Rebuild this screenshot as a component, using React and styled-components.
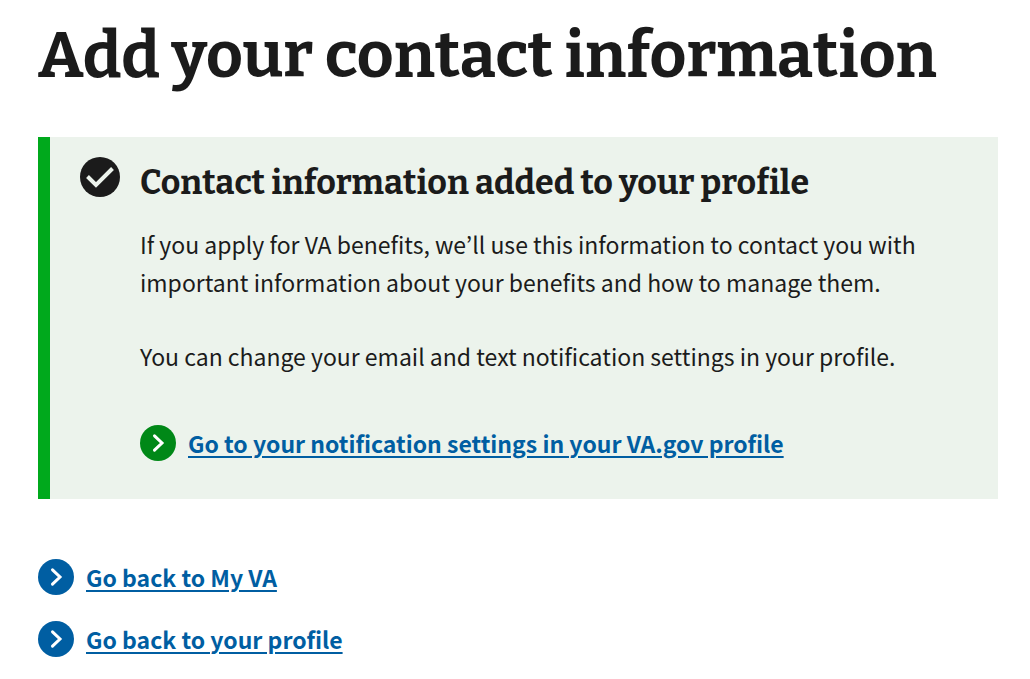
import React from "react";
import styled, { createGlobalStyle } from "styled-components";

const GlobalStyle = createGlobalStyle`
  * { box-sizing: border-box; }
  body {
    margin: 0;
    background: #fff;
    color: #1b1b1b;
    font-family: "Noto Sans CJK KR", "Noto Sans", sans-serif;
  }
`;

const Page = styled.main`
  padding: 16px 32px 16px 38px;
`;

const Title = styled.h1`
  margin: 0 0 41px;
  font: 700 64px/80px Bitter, "DejaVu Serif", serif;
`;

const Alert = styled.section`
  display: flex;
  gap: 20px;
  padding: 20px 30px 38px;
  border-left: 12px solid #00a91c;
  background: #ecf3ec;
`;

const StatusIcon = styled.svg`
  flex: none;
  width: 40px;
  height: 40px;
`;

const AlertBody = styled.div`
  min-width: 0;
`;

const AlertTitle = styled.h2`
  margin: 4px 0 20px;
  font: 700 34px/44px Bitter, "DejaVu Serif", serif;
`;

const Text = styled.p`
  margin: 0 0 36px;
  font-size: 23px;
  line-height: 38px;
`;

const AlertAction = styled.div`
  padding-top: 14px;
`;

const ActionLink = styled.a`
  display: flex;
  width: fit-content;
  align-items: center;
  gap: 12px;
  color: #005ea2;
  font-size: 23px;
  font-weight: 700;
  line-height: 36px;
  text-decoration: none;
`;

const LinkLabel = styled.span`
  text-decoration: underline;
  text-decoration-thickness: 2px;
  text-underline-offset: 3px;
`;

const LinkIcon = styled.svg`
  flex: none;
  width: 36px;
  height: 36px;
  fill: ${(p) => (p.$primary ? "#008817" : "#005ea2")};
`;

const LinkList = styled.nav`
  display: flex;
  flex-direction: column;
  gap: 26px;
  margin-top: 60px;
`;

function Action({ primary, children }) {
  return (
    <ActionLink href="#">
      <LinkIcon $primary={primary} viewBox="0 0 36 36" aria-hidden="true">
        <circle cx="18" cy="18" r="18" />
        <path
          d="M14.500 10.800 22 18l-7.500 7.200"
          fill="none"
          stroke="#fff"
          strokeWidth="3"
          strokeLinecap="round"
        />
      </LinkIcon>
      <LinkLabel>{children}</LinkLabel>
    </ActionLink>
  );
}

export default function App() {
  return (
    <>
      <GlobalStyle />
      <Page>
        <Title>Add your contact information</Title>
        <Alert>
          <StatusIcon viewBox="0 0 40 40" aria-hidden="true">
            <circle cx="20" cy="20" r="20" fill="#1b1b1b" />
            <path
              d="M7.500 19.500 16 28 32.500 11.500"
              fill="none"
              stroke="#ecf3ec"
              strokeWidth="4"
            />
          </StatusIcon>
          <AlertBody>
            <AlertTitle>Contact information added to your profile</AlertTitle>
            <Text>
              If you apply for VA benefits, we’ll use this information to contact you with
              important information about your benefits and how to manage them.
            </Text>
            <Text>
              You can change your email and text notification settings in your profile.
            </Text>
            <AlertAction>
              <Action primary>Go to your notification settings in your VA.gov profile</Action>
            </AlertAction>
          </AlertBody>
        </Alert>
        <LinkList>
          <Action>Go back to My VA</Action>
          <Action>Go back to your profile</Action>
        </LinkList>
      </Page>
    </>
  );
}
